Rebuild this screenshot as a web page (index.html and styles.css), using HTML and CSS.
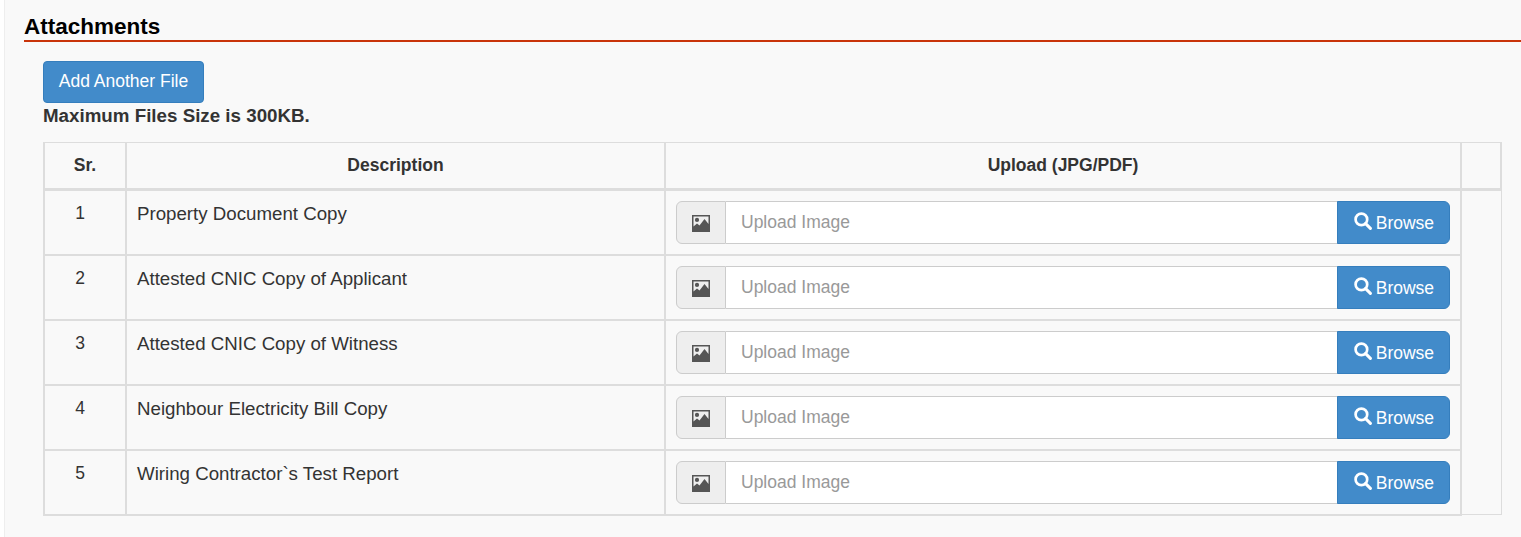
FILE: index.html
```html
<!DOCTYPE html>
<html lang="en">
<head>
<meta charset="utf-8">
<title>Attachments</title>
<link rel="stylesheet" href="styles.css">
</head>
<body>
<svg class="sprites" width="0" height="0" aria-hidden="true">
  <symbol id="i-picture" viewBox="0 0 18 17">
    <path fill-rule="evenodd" d="M0 0h18v17H0zM1.5 1.5V11.5L5 8.5l2.5 2L12.5 4l4 5V1.5zM5 2.8a2.1 2.1 0 1 1 0 4.2 2.1 2.1 0 0 1 0-4.2z"/>
  </symbol>
  <symbol id="i-search" viewBox="0 0 18 18">
    <circle cx="7.4" cy="7.4" r="5.8" fill="none" stroke="currentColor" stroke-width="2.7"/>
    <path d="M11.6 11.6L16.4 16.4" fill="none" stroke="currentColor" stroke-width="3" stroke-linecap="round"/>
  </symbol>
</svg>
<main class="page">
  <h2 class="section-title">Attachments</h2>
  <div class="section-body">
    <button class="btn btn-add" type="button">Add Another File</button>
    <p class="note">Maximum Files Size is 300KB.</p>
    <table class="files">
      <thead>
        <tr>
          <th class="col-sr">Sr.</th>
          <th class="col-desc">Description</th>
          <th class="col-upload">Upload (JPG/PDF)</th>
          <th class="col-extra"></th>
        </tr>
      </thead>
      <tbody>
        <tr>
          <td class="sr">1</td>
          <td class="desc">Property Document Copy</td>
          <td class="upload">
            <div class="input-group">
              <span class="addon"><svg class="icon-picture"><use href="#i-picture"/></svg></span>
              <span class="field">Upload Image</span>
              <button class="btn btn-browse" type="button"><svg class="icon-search"><use href="#i-search"/></svg> Browse</button>
            </div>
          </td>
        </tr>
        <tr>
          <td class="sr">2</td>
          <td class="desc">Attested CNIC Copy of Applicant</td>
          <td class="upload">
            <div class="input-group">
              <span class="addon"><svg class="icon-picture"><use href="#i-picture"/></svg></span>
              <span class="field">Upload Image</span>
              <button class="btn btn-browse" type="button"><svg class="icon-search"><use href="#i-search"/></svg> Browse</button>
            </div>
          </td>
        </tr>
        <tr>
          <td class="sr">3</td>
          <td class="desc">Attested CNIC Copy of Witness</td>
          <td class="upload">
            <div class="input-group">
              <span class="addon"><svg class="icon-picture"><use href="#i-picture"/></svg></span>
              <span class="field">Upload Image</span>
              <button class="btn btn-browse" type="button"><svg class="icon-search"><use href="#i-search"/></svg> Browse</button>
            </div>
          </td>
        </tr>
        <tr>
          <td class="sr">4</td>
          <td class="desc">Neighbour Electricity Bill Copy</td>
          <td class="upload">
            <div class="input-group">
              <span class="addon"><svg class="icon-picture"><use href="#i-picture"/></svg></span>
              <span class="field">Upload Image</span>
              <button class="btn btn-browse" type="button"><svg class="icon-search"><use href="#i-search"/></svg> Browse</button>
            </div>
          </td>
        </tr>
        <tr>
          <td class="sr">5</td>
          <td class="desc">Wiring Contractor`s Test Report</td>
          <td class="upload">
            <div class="input-group">
              <span class="addon"><svg class="icon-picture"><use href="#i-picture"/></svg></span>
              <span class="field">Upload Image</span>
              <button class="btn btn-browse" type="button"><svg class="icon-search"><use href="#i-search"/></svg> Browse</button>
            </div>
          </td>
        </tr>
      </tbody>
    </table>
  </div>
</main>
</body>
</html>
```
FILE: styles.css
```css
* { box-sizing: border-box; }
html, body { margin: 0; padding: 0; }
body {
  background: #fff;
  color: #333;
  font-family: "Liberation Sans", Arial, sans-serif;
  font-size: 17.5px;
  overflow: hidden;
}
.sprites { position: absolute; }
.page {
  margin-left: 4px;
  height: 537px;
  padding: 13px 0 0 19px;
  background: #f9f9f9;
  border-left: 1px solid #eee;
}
.section-title {
  margin: 0;
  height: 29px;
  line-height: 27px;
  font-size: 22.5px;
  font-weight: 700;
  color: #000;
  border-bottom: 2px solid #c9340a;
}
.section-body { padding: 19px 19px 0 19px; }
.btn {
  font: inherit;
  color: #fff;
  background: #428bca;
  border: 1px solid #357ebd;
  cursor: pointer;
}
.btn-add {
  display: block;
  width: 161px;
  height: 42px;
  padding: 0 0 2px;
  border-radius: 4px;
}
.note {
  margin: 0;
  height: 39px;
  line-height: 26px;
  font-size: 18.75px;
  font-weight: 700;
}
.files {
  width: 1457px;
  table-layout: fixed;
  border-collapse: collapse;
  border: 1px solid #ddd;
}
.files th, .files td {
  border: 2px solid #ddd;
  padding: 0;
}
.files th {
  height: 47px;
  border-top-width: 1px;
  border-bottom-width: 3px;
  text-align: center;
  vertical-align: middle;
}
.col-sr { width: 82px; }
.col-desc { width: 539px; }
.col-upload { width: 796px; }
.col-extra { width: 40px; }
.files td {
  height: 65px;
  vertical-align: top;
}
.files .sr { text-align: center; padding: 9px 10px 0 0; line-height: 26px; }
.files .desc { padding: 10px 10px 0; line-height: 26px; font-size: 18.7px; }
.files .upload { padding: 10px 10px 0; }
.input-group {
  display: flex;
  height: 43px;
}
.addon {
  flex: 0 0 50px;
  display: flex;
  align-items: center;
  justify-content: center;
  padding: 2px 0 0;
  background: #eee;
  border: 1px solid #ccc;
  border-radius: 6px 0 0 6px;
}
.icon-picture { width: 18px; height: 17px; fill: #555; }
.field {
  flex: 1;
  display: block;
  padding-left: 15px;
  line-height: 41px;
  color: #999;
  background: #fff;
  border: 1px solid #ccc;
  border-left: 0;
}
.btn-browse {
  flex: 0 0 113px;
  padding: 1px 0 0;
  margin-left: -1px;
  border-radius: 0 6px 6px 0;
}
.icon-search { width: 18px; height: 18px; margin: 0 -1px 0 1px; vertical-align: -1px; color: #fff; }
```
